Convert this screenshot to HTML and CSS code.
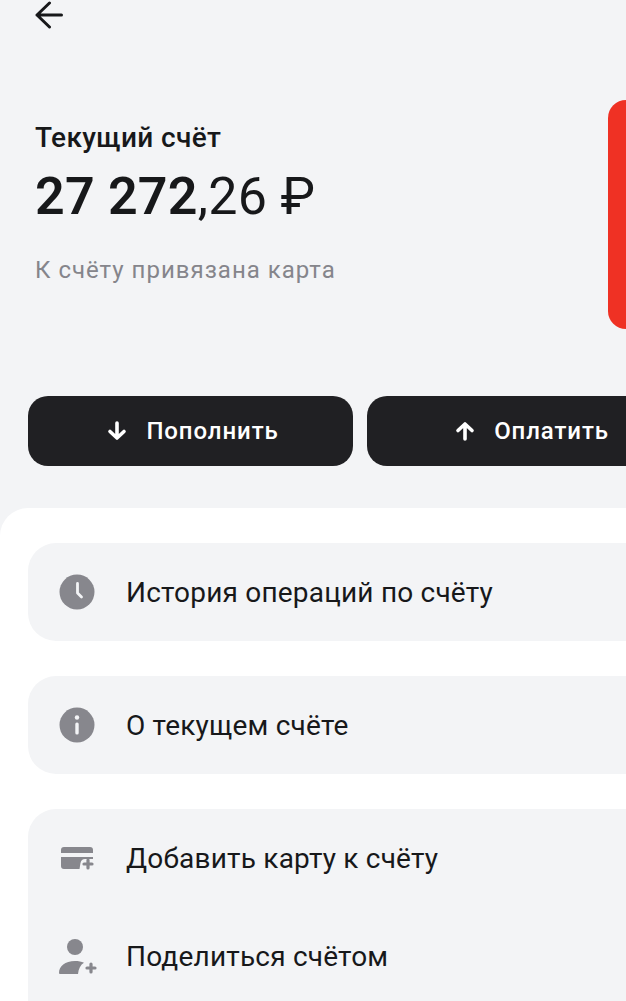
FILE: index.html
```html
<!DOCTYPE html>
<html lang="ru">
<head>
<meta charset="UTF-8">
<meta name="viewport" content="width=device-width, initial-scale=1.0">
<title>Текущий счёт</title>
<link rel="stylesheet" href="styles.css">
</head>
<body>

<div class="screen">
  <div class="top-bar">
    <svg class="back-icon" viewBox="0 0 28 28" fill="none" stroke="#17181a" stroke-width="3" stroke-linecap="round" stroke-linejoin="round">
      <path d="M26.500 14H2M14.500 2 2 14l12.500 12"/>
    </svg>
  </div>

  <div class="account">
    <div class="account-info">
      <div class="account-title">Текущий счёт</div>
      <div class="account-sum"><b>27 272</b>,26 <span class="currency">₽</span></div>
      <div class="account-note">К счёту привязана карта</div>
    </div>
    <div class="bank-card"></div>
  </div>

  <div class="actions">
    <div class="action-btn">
      <svg class="action-icon" viewBox="0 0 20 20" fill="none" stroke="#fff" stroke-width="3.600" stroke-linecap="round" stroke-linejoin="round">
        <path d="M10 2v15M3 10.500 10 17l7-6.500"/>
      </svg>
      Пополнить
    </div>
    <div class="action-btn">
      <svg class="action-icon" viewBox="0 0 20 20" fill="none" stroke="#fff" stroke-width="3.600" stroke-linecap="round" stroke-linejoin="round">
        <path d="M10 18V3M3 9.500 10 3l7 6.500"/>
      </svg>
      Оплатить
    </div>
  </div>

  <div class="sheet">
    <div class="menu-group">
      <div class="menu-row">
        <svg class="menu-icon" viewBox="0 0 36 36">
          <circle cx="18" cy="18" r="17.500" fill="#87878d"/>
          <path d="M18.500 9.500V19l4 4" fill="none" stroke="#f3f4f6" stroke-width="2.800" stroke-linecap="round" stroke-linejoin="round"/>
        </svg>
        <span>История операций по счёту</span>
      </div>
    </div>

    <div class="menu-group">
      <div class="menu-row">
        <svg class="menu-icon" viewBox="0 0 36 36">
          <circle cx="18" cy="18" r="17.500" fill="#87878d"/>
          <circle cx="18" cy="10.500" r="2.200" fill="#f3f4f6"/>
          <rect x="16.300" y="15.500" width="3.400" height="12" rx="1.500" fill="#f3f4f6"/>
        </svg>
        <span>О текущем счёте</span>
      </div>
    </div>

    <div class="menu-group last">
      <div class="menu-row">
        <svg class="menu-icon" viewBox="0 0 36 36">
          <path d="M2 10a3 3 0 0 1 3-3h26a3 3 0 0 1 3 3v3H2z" fill="#87878d"/>
          <path d="M2 17h32v2h-8c-2.500 0-4 1.500-4.500 4l-1 6H5a3 3 0 0 1-3-3z" fill="#87878d"/>
          <path d="M29 20v8M25 24h8" stroke="#87878d" stroke-width="3.200" stroke-linecap="round"/>
        </svg>
        <span>Добавить карту к счёту</span>
      </div>
      <div class="menu-row">
        <svg class="menu-icon" viewBox="0 0 36 36">
          <circle cx="16" cy="9" r="8" fill="#87878d"/>
          <path d="M0 35c0-7 6-12 16-12 3.500 0 6.500.6 9 1.700-3.500 2-5.500 6-6 11.300H1a1 1 0 0 1-1-1z" fill="#87878d"/>
          <path d="M32 26v8M28 30h8" stroke="#87878d" stroke-width="3.200" stroke-linecap="round"/>
        </svg>
        <span>Поделиться счётом</span>
      </div>
    </div>
  </div>
</div>

</body>
</html>
```

FILE: styles.css
```css
/* Account screen */
body, html {
  margin: 0;
  padding: 0;
  font-family: Roboto, "Liberation Sans", sans-serif;
  background-color: #f3f4f6;
}
.screen {
  width: 626px;
  height: 1001px;
  overflow: hidden;
  color: #17181a;
}
.top-bar {
  height: 99px;
  padding: 1px 0 0 35px;
}
.back-icon {
  display: block;
  width: 28px;
  height: 28px;
}
.account {
  display: flex;
  justify-content: space-between;
  height: 229px;
  margin-bottom: 67px;
}
.account-info {
  padding: 21px 0 0 35px;
}
.account-title {
  font-size: 28px;
  font-weight: 500;
  line-height: 34px;
  letter-spacing: 0.35px;
}
.account-sum {
  font-size: 52px;
  font-weight: 400;
  line-height: 60px;
  margin-top: 12px;
  letter-spacing: 0.3px;
}
.account-sum b {
  font-weight: 600;
  letter-spacing: 0.2px;
}
.currency {
  font-weight: 400;
}
.account-note {
  margin-top: 28px;
  font-size: 24px;
  line-height: 30px;
  letter-spacing: 1px;
  color: #85858b;
}
.bank-card {
  width: 18px;
  background-color: #ef3124;
  border-radius: 24px 0 0 24px;
}
.actions {
  display: flex;
  gap: 14px;
  padding-left: 28px;
  margin-bottom: 42px;
}
.action-btn {
  flex: 0 0 325px;
  box-sizing: border-box;
  padding-left: 5px;
  height: 70px;
  display: flex;
  align-items: center;
  justify-content: center;
  gap: 19px;
  background-color: #202023;
  border-radius: 20px;
  color: #fff;
  font-size: 24px;
  font-weight: 500;
  letter-spacing: 0.9px;
}
.action-icon {
  width: 20px;
  height: 20px;
}
.sheet {
  background-color: #fff;
  border-radius: 28px 0 0 0;
  padding: 35px 0 0 28px;
  height: 500px;
}
.menu-group {
  width: 640px;
  background-color: #f3f4f6;
  border-radius: 28px 0 0 28px;
  margin-bottom: 35px;
}
.menu-group.last {
  padding-bottom: 60px;
}
.menu-row {
  display: flex;
  align-items: center;
  gap: 31px;
  height: 98px;
  padding-left: 31px;
  font-size: 28px;
  letter-spacing: 0.2px;
}
.menu-icon {
  width: 36px;
  height: 36px;
  flex-shrink: 0;
  overflow: visible;
}
```
